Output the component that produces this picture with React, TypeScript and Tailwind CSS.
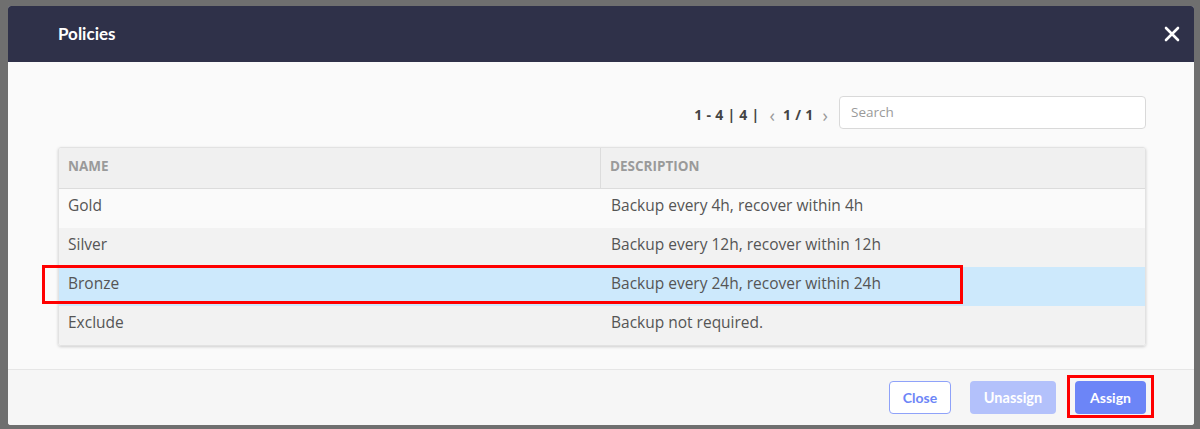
import React from 'react';

const rows = [
  { name: 'Gold', desc: 'Backup every 4h, recover within 4h', bg: 'bg-[#fafafa]' },
  { name: 'Silver', desc: 'Backup every 12h, recover within 12h', bg: 'bg-[#f2f2f2]' },
  { name: 'Bronze', desc: 'Backup every 24h, recover within 24h', bg: 'bg-[#cde9fc]' },
  { name: 'Exclude', desc: 'Backup not required.', bg: 'bg-[#f2f2f2]' },
];

const App = () => {
  return (
    <div className="w-[1200px] h-[429px] bg-[#6f6f6f] pt-[6px] pl-[8px] pr-[6px] pb-[4px] font-['Open_Sans',sans-serif]">
      <div className="h-full flex flex-col bg-[#fafafa] rounded-[3px] overflow-hidden">
        {/* Header */}
        <div className="h-[56px] shrink-0 bg-[#2f3149] flex items-center justify-between pl-[50px] pr-[14px]">
          <span className="text-white font-bold text-[17px] font-['Lato',sans-serif]">Policies</span>
          <svg width="16" height="16" viewBox="0 0 16 16" className="text-white">
            <path d="M2 2 L14 14 M14 2 L2 14" stroke="currentColor" strokeWidth="2.6" strokeLinecap="round" />
          </svg>
        </div>

        {/* Body */}
        <div className="flex-1 flex flex-col pt-[34px] pl-[50px] pr-[48px] pb-[22px] relative">
          <div className="flex items-center justify-end gap-[9px]">
            <div className="flex items-center text-[14px] font-bold text-[#444] pt-[4px]">
              <span className="tracking-[0.3px]">1 - 4 | 4 |</span>
              <span className="text-[#999] font-normal text-[18px] leading-none ml-[10px] mr-[8px]">‹</span>
              <span className="tracking-[0.3px]">1 / 1</span>
              <span className="text-[#999] font-normal text-[18px] leading-none ml-[9px] mr-[2px]">›</span>
            </div>
            <div className="w-[307px] h-[33px] bg-white border border-[#d9d9d9] rounded-[4px] flex items-center px-[11px] text-[13.5px] text-[#9a9a9a]">
              Search
            </div>
          </div>

          <div className="mt-[18px] border border-[#e2e2e2] rounded-[3px] shadow-[0_1px_3px_rgba(0,0,0,0.18)] overflow-hidden">
            <div className="grid grid-cols-[542px_1fr] h-[41px] bg-[#f0f0f0] border-b border-[#dcdcdc] text-[13.5px] font-bold text-[#9a9a9a] uppercase">
              <div className="flex items-center pl-[9px] pb-[4px] border-r border-[#dcdcdc]">Name</div>
              <div className="flex items-center pl-[9px] pb-[4px]">Description</div>
            </div>
            {rows.map((r) => (
              <div key={r.name} className={`grid grid-cols-[542px_1fr] h-[39px] ${r.bg} text-[15.5px] text-[#555]`}>
                <div className="flex items-center pl-[9px] pb-[5px]">{r.name}</div>
                <div className="flex items-center pl-[10px] pb-[5px]">{r.desc}</div>
              </div>
            ))}
          </div>

          {/* highlight on Bronze row */}
          <div className="absolute left-[34px] top-[203px] w-[921px] h-[39px] border-[3px] border-[#ff0000] pointer-events-none" />
        </div>

        {/* Footer */}
        <div className="h-[56px] shrink-0 bg-[#f6f6f6] border-t border-[#e6e6e6] flex items-center justify-end gap-[19px] pr-[48px] font-['Lato',sans-serif] text-[14px] font-bold">
          <button className="h-[33px] w-[62px] rounded-[4px] border border-[#8fa2f9] bg-white text-[#6d86f7]">
            Close
          </button>
          <button className="h-[33px] w-[86px] rounded-[4px] bg-[#b3c1fb] text-white text-[14.5px]">Unassign</button>
          <div className="relative">
            <button className="h-[33px] w-[71px] rounded-[4px] bg-[#6c85f7] text-white">Assign</button>
            <div className="absolute -left-[8px] -right-[8px] -top-[6px] -bottom-[4px] border-[3px] border-[#ff0000] pointer-events-none" />
          </div>
        </div>
      </div>
    </div>
  );
};

export default App;
